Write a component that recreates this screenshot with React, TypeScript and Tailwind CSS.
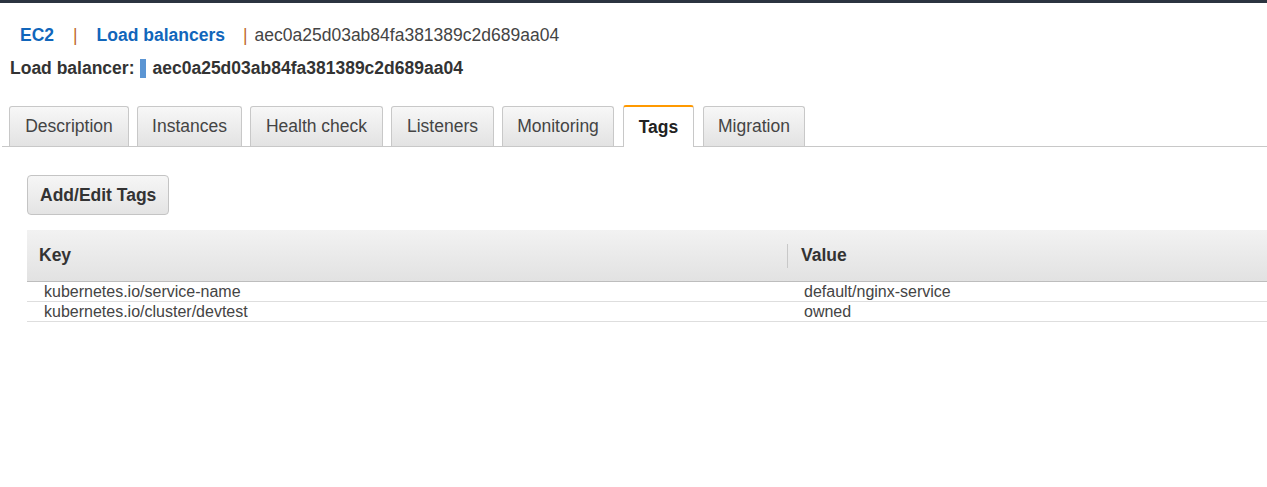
import React from 'react';

const tabs = [
  { label: 'Description', w: 'w-[120px]' },
  { label: 'Instances', w: 'w-[105px]' },
  { label: 'Health check', w: 'w-[133px]' },
  { label: 'Listeners', w: 'w-[103px]' },
  { label: 'Monitoring', w: 'w-[112px]' },
  { label: 'Tags', w: 'w-[71px]' },
  { label: 'Migration', w: 'w-[102px]' },
];

const tags = [
  { key: 'kubernetes.io/service-name', value: 'default/nginx-service' },
  { key: 'kubernetes.io/cluster/devtest', value: 'owned' },
];

const lbId = 'aec0a25d03ab84fa381389c2d689aa04';

export default function App() {
  return (
    <div className="min-h-[487px] bg-white font-['Liberation_Sans',Arial,sans-serif] text-[#444]">
      <div className="h-[3px] bg-[#2b3440]" />

      {/* breadcrumb */}
      <div className="flex items-center pl-[20px] pt-[21px] text-[17.5px] leading-[22px]">
        <a className="font-bold text-[#1166bb]">EC2</a>
        <span className="ml-[19px] mr-[19px] text-[#c06a2b]">|</span>
        <a className="font-bold text-[#1166bb]">Load balancers</a>
        <span className="ml-[18px] mr-[7px] text-[#c06a2b]">|</span>
        <span className="text-[#444]">{lbId}</span>
      </div>

      {/* title */}
      <div className="mt-[11px] flex items-center pl-[10px] text-[17.5px] font-bold leading-[22px] text-[#333]">
        <span>Load balancer:</span>
        <span className="ml-[6px] mr-[6px] inline-block h-[19px] w-[6px] bg-[#5b95d3]" />
        <span>{lbId}</span>
      </div>

      {/* tabs */}
      <div className="mt-[26px] ml-[2px] flex items-end gap-[8px] border-b border-[#c8c8c8] pl-[7px]">
        {tabs.map((t) =>
          t.label === 'Tags' ? (
            <div
              key={t.label}
              className={`-mb-px mx-[1px] flex h-[42px] ${t.w} items-center justify-center rounded-t-[3px] border border-b-0 border-[#c8c8c8] border-t-2 border-t-[#f90] bg-white text-[17.5px] font-bold text-[#222]`}
            >
              {t.label}
            </div>
          ) : (
            <div
              key={t.label}
              className={`flex h-[40px] ${t.w} items-center justify-center rounded-t-[3px] border border-b-0 border-[#c8c8c8] bg-gradient-to-b from-[#f7f7f7] to-[#e3e3e3] text-[17.5px] text-[#444]`}
            >
              {t.label}
            </div>
          )
        )}
      </div>

      {/* content */}
      <div className="pl-[27px] pt-[28px]">
        <button className="h-[40px] rounded-[4px] border border-[#c4c4c4] bg-gradient-to-b from-[#f6f6f6] to-[#e4e4e4] px-[12px] text-[17.5px] font-bold text-[#333]">
          Add/Edit Tags
        </button>

        <div className="mt-[15px] text-[16px]">
          <div className="flex h-[52px] items-center border-b border-[#bdbdbd] bg-gradient-to-b from-[#f2f2f2] to-[#e2e2e2] text-[17.5px] font-bold text-[#333]">
            <div className="w-[760px] pl-[12px]">Key</div>
            <div className="h-[24px] w-px bg-[#c8c8c8]" />
            <div className="pl-[13px]">Value</div>
          </div>
          {tags.map((r) => (
            <div key={r.key} className="flex h-[20px] items-center border-b border-[#dedede] leading-[19px] text-[#444]">
              <div className="w-[777px] pl-[17px]">{r.key}</div>
              <div>{r.value}</div>
            </div>
          ))}
        </div>
      </div>
    </div>
  );
}
